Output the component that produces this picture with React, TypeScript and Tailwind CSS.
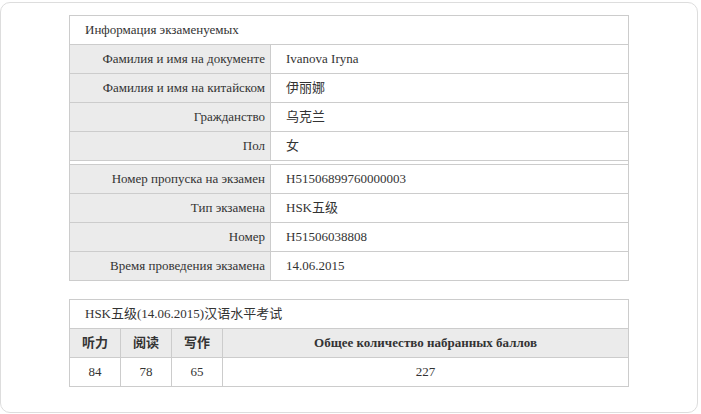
import React from "react";

function Row({ label, value }: { label: string; value: string }) {
  return (
    <div className="flex h-[29px] border-b border-[#cccccc]">
      <div className="w-[201px] shrink-0 bg-[#ebebeb] border-r border-[#cccccc] flex items-center justify-end pr-[5px]">
        {label}
      </div>
      <div className="flex-1 flex items-center pl-[15px]">{value}</div>
    </div>
  );
}

export default function App() {
  return (
    <div className="w-[701px] h-[414px] bg-white overflow-hidden text-[13px] text-[#333333] font-['Liberation_Serif','Times_New_Roman','Noto_Sans_CJK_SC',serif]">
      <div className="mt-[2px] w-[698px] h-[411px] border border-[#dddddd] rounded-[10px] pl-[68px] pt-[12px]">
        <div className="w-[560px] border-l border-r border-t border-[#cccccc]">
          <div className="h-[29px] border-b border-[#cccccc] flex items-center pl-[15px]">
            Информация экзаменуемых
          </div>
          <Row label="Фамилия и имя на документе" value="Ivanova Iryna" />
          <Row label="Фамилия и имя на китайском" value="伊丽娜" />
          <Row label="Гражданство" value="乌克兰" />
          <Row label="Пол" value="女" />
          <div className="h-[4px] border-b border-[#cccccc]" />
          <Row label="Номер пропуска на экзамен" value="H51506899760000003" />
          <Row label="Тип экзамена" value="HSK五级" />
          <Row label="Номер" value="H51506038808" />
          <Row label="Время проведения экзамена" value="14.06.2015" />
        </div>

        <div className="mt-[18px] w-[560px] border-l border-r border-t border-[#cccccc]">
          <div className="h-[29px] border-b border-[#cccccc] flex items-center pl-[15px]">
            HSK五级(14.06.2015)汉语水平考试
          </div>
          <div className="flex h-[29px] border-b border-[#cccccc] bg-[#ebebeb] font-bold">
            <div className="w-[51px] border-r border-[#cccccc] flex items-center justify-center">听力</div>
            <div className="w-[51px] border-r border-[#cccccc] flex items-center justify-center">阅读</div>
            <div className="w-[51px] border-r border-[#cccccc] flex items-center justify-center">写作</div>
            <div className="flex-1 flex items-center justify-center">Общее количество набранных баллов</div>
          </div>
          <div className="flex h-[29px] border-b border-[#cccccc]">
            <div className="w-[51px] border-r border-[#cccccc] flex items-center justify-center">84</div>
            <div className="w-[51px] border-r border-[#cccccc] flex items-center justify-center">78</div>
            <div className="w-[51px] border-r border-[#cccccc] flex items-center justify-center">65</div>
            <div className="flex-1 flex items-center justify-center">227</div>
          </div>
        </div>
      </div>
    </div>
  );
}
